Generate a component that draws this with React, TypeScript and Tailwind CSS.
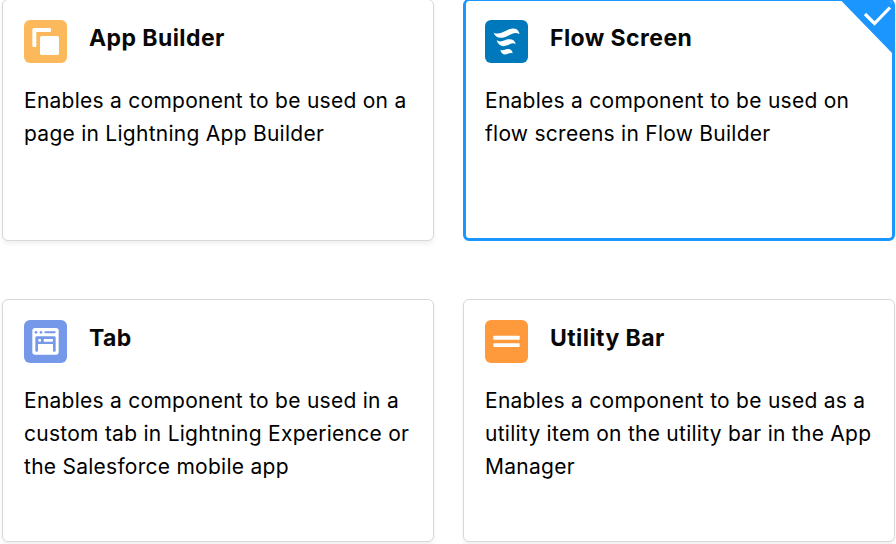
import type { ReactNode } from "react";

type Target = {
  id: string;
  title: string;
  lines: string[];
  iconClass: string;
  icon: ReactNode;
  selected?: boolean;
};

const targets: Target[] = [
  {
    id: "app-builder",
    title: "App Builder",
    lines: ["Enables a component to be used on a", "page in Lightning App Builder"],
    iconClass: "bg-[#fcb95b]",
    icon: <AppBuilderIcon />,
  },
  {
    id: "flow-screen",
    title: "Flow Screen",
    lines: ["Enables a component to be used on", "flow screens in Flow Builder"],
    iconClass: "bg-[#0079bc]",
    icon: <FlowIcon />,
    selected: true,
  },
  {
    id: "tab",
    title: "Tab",
    lines: [
      "Enables a component to be used in a",
      "custom tab in Lightning Experience or",
      "the Salesforce mobile app",
    ],
    iconClass: "bg-[#7698e8]",
    icon: <TabIcon />,
  },
  {
    id: "utility-bar",
    title: "Utility Bar",
    lines: [
      "Enables a component to be used as a",
      "utility item on the utility bar in the App",
      "Manager",
    ],
    iconClass: "bg-[#ff9a3c]",
    icon: <UtilityBarIcon />,
  },
];

export default function App() {
  return (
    <main className="h-[544px] w-[896px] overflow-hidden bg-white font-['Inter','Liberation_Sans',sans-serif] text-[#080808]">
      <div className="-mt-px grid grid-cols-[432px_432px] grid-rows-[242px_243px] gap-x-[29px] gap-y-[58px] pl-[2px]">
        {targets.map((target) => (
          <TargetCard key={target.id} target={target} />
        ))}
      </div>
    </main>
  );
}

function TargetCard({ target }: { target: Target }) {
  return (
    <section
      className={`relative overflow-hidden rounded-[6px] bg-white ${
        target.selected
          ? "border-[3px] border-t-2 border-[#1b96ff] px-[19px] pt-[19px]"
          : "border border-[#d8d8d8] px-[21px] pt-[20px] shadow-[0_3px_4px_rgba(0,0,0,0.06)]"
      }`}
    >
      {target.selected && <SelectedCorner />}
      <div className="flex items-start gap-[22px]">
        <span className={`h-[43px] w-[43px] shrink-0 rounded-[6px] ${target.iconClass}`}>
          {target.icon}
        </span>
        <h2 className="pt-[2px] text-[23px] leading-[32px] font-bold tracking-[0.42px] whitespace-nowrap">
          {target.title}
        </h2>
      </div>
      <p className="mt-[22.4px] text-[21px] leading-[32.6px] tracking-[0.26px] whitespace-nowrap text-black">
        {target.lines.map((line) => (
          <span key={line} className="block">
            {line}
          </span>
        ))}
      </p>
    </section>
  );
}

function SelectedCorner() {
  return (
    <svg className="absolute top-0 right-0 h-[52px] w-[52px]" viewBox="0 0 52 52" fill="none">
      <path d="M0.5 -1H52V52Z" fill="#1b96ff" />
      <path d="M25 13L34.5 22.5L50 6.5" stroke="#fff" strokeWidth="3.2" />
    </svg>
  );
}

function AppBuilderIcon() {
  return (
    <svg className="h-full w-full" viewBox="0 0 129 129" fill="#fff">
      <path d="M30 24H78Q81 24 81 27V33Q81 36 78 36H37V78Q37 81 34 81H28Q25 81 25 78V29Q25 24 30 24Z" />
      <rect x="48" y="48" width="57" height="57" rx="5" />
    </svg>
  );
}

function FlowIcon() {
  return (
    <svg className="h-full w-full" viewBox="0 0 129 129" fill="#fff">
      <path d="M26 38C44 46 60 33 72 28C86 23 97 26 101 35Q104 41 103 42C88 35 79 43 66 49C46 58 31 53 26 38Z" />
      <path d="M35 61C48 69 58 60 68 58C82 56 90 61 92 72C81 67 76 73 67 76C53 82 39 77 35 61Z" />
      <path d="M46 89C55 93 60 88 67 87C77 86 82 91 83 100C76 97 73 100 67 102C57 106 48 101 46 89Z" />
    </svg>
  );
}

function TabIcon() {
  return (
    <svg className="h-full w-full" viewBox="0 0 129 129">
      <rect x="25" y="24" width="79" height="80" rx="8" fill="#fff" />
      <g fill="#7698e8">
        <circle cx="36" cy="37" r="4" />
        <circle cx="51" cy="37" r="4" />
        <rect x="61" y="34" width="34" height="6" rx="3" />
        <path d="M38 49H91Q95 49 95 53V92Q95 95 92 95H90Q87 95 87 92V72H42V92Q42 95 39 95H37Q34 95 34 92V53Q34 49 38 49Z" />
      </g>
      <rect x="43" y="57" width="8" height="8" rx="2" fill="#fff" />
      <rect x="59" y="57" width="28" height="8" rx="2" fill="#fff" />
    </svg>
  );
}

function UtilityBarIcon() {
  return (
    <svg className="h-full w-full" viewBox="0 0 129 129" fill="#fff">
      <rect x="25" y="47" width="79" height="12" rx="2" />
      <rect x="25" y="70" width="79" height="11" rx="2" />
    </svg>
  );
}
